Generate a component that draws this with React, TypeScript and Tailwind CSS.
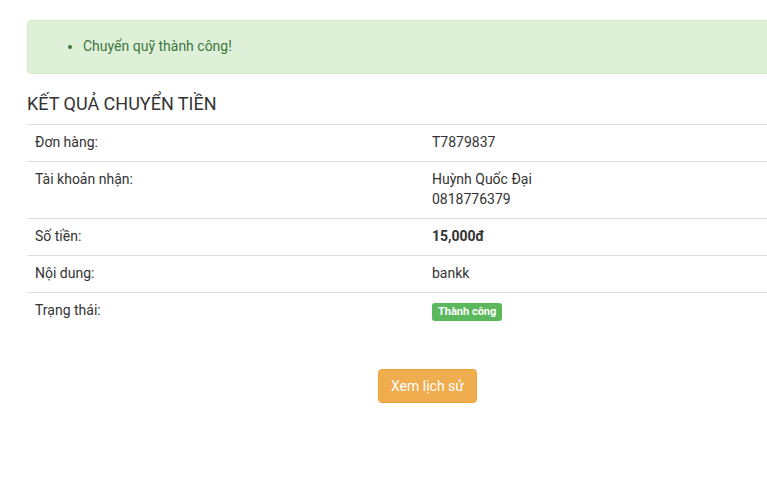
const rows = [
  { label: "Đơn hàng:", value: <span>T7879837</span> },
  {
    label: "Tài khoản nhận:",
    value: (
      <span>
        Huỳnh Quốc Đại
        <br />
        0818776379
      </span>
    ),
  },
  { label: "Số tiền:", value: <b className="font-bold">15,000đ</b> },
  { label: "Nội dung:", value: <span>bankk</span> },
  {
    label: "Trạng thái:",
    value: (
      <span className="inline-block rounded-[3px] bg-[#5cb85c] px-[6px] pt-[3px] pb-[4px] text-[11px] font-bold leading-[11px] text-white">
        Thành công
      </span>
    ),
  },
];

export default function App() {
  return (
    <div className="w-full h-[477px] overflow-hidden bg-white font-['Roboto',sans-serif] text-[14px] leading-[20px] text-[#333]">
      <div className="w-[801px] ml-[27px] pt-[20px]">
        {/* Alert */}
        <div className="h-[54px] rounded-[4px] border border-[#d6e9c6] bg-[#dff0d8] px-[15px] pt-[15px] pb-[17px] text-[#3c763d]">
          <ul className="list-disc pl-[40px]">
            <li>Chuyển quỹ thành công!</li>
          </ul>
        </div>

        <h3 className="mt-[20px] mb-[10px] text-[18px] leading-[20px] font-normal text-[#333]">
          KẾT QUẢ CHUYỂN TIỀN
        </h3>

        {/* Kết quả */}
        <table className="w-full border-collapse">
          <tbody>
            {rows.map((row, i) => (
              <tr key={i}>
                <td className="w-[397px] border-t border-[#ddd] px-[8px] pt-[7px] pb-[9px] align-top text-[#333]">
                  {row.label}
                </td>
                <td className="border-t border-[#ddd] px-[8px] pt-[7px] pb-[9px] align-top text-[#333]">
                  {row.value}
                </td>
              </tr>
            ))}
          </tbody>
        </table>

        <div className="mt-[39px] flex pl-[351px]">
          <button className="h-[34px] rounded-[4px] border border-[#eea236] bg-[#f0ad4e] px-[12px] text-[14px] text-white">
            Xem lịch sử
          </button>
        </div>
      </div>
    </div>
  );
}
